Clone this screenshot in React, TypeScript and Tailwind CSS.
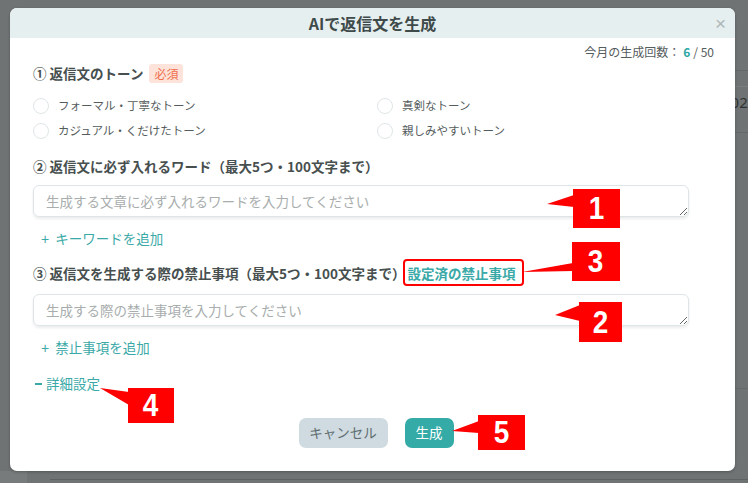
import React from "react";

function Radio({ label }: { label: string }) {
  return (
    <div className="flex items-center h-[25px]">
      <span className="w-[16px] h-[16px] rounded-full border border-[#dfe6e7] bg-white shrink-0" />
      <span className="ml-[9px] text-[11.5px] text-[#555c5c] leading-none">{label}</span>
    </div>
  );
}

function NumBox({ n, cls }: { n: string; cls: string }) {
  return (
    <div className={`absolute bg-[#ff0000] flex items-center justify-center text-white font-bold font-['Liberation_Sans',Arial,sans-serif] text-[31px] leading-none ${cls}`}>
      <span className="scale-x-[0.9] inline-block">{n}</span>
    </div>
  );
}

export default function App() {
  return (
    <div className="relative w-[748px] h-[483px] overflow-hidden bg-[#6f7373] font-['Noto_Sans_CJK_JP','Noto_Sans',sans-serif]">
      {/* background page hints */}
      <div className="absolute left-[700px] top-[70px] w-[48px] h-px bg-[#636767]" />
      <div className="absolute left-[700px] top-[86px] w-[48px] h-px bg-[#7a7e7e]" />
      <div className="absolute left-[722px] top-[91px] text-[15px] text-[#2f3333] font-['Noto_Sans',sans-serif]">202</div>
      <div className="absolute left-[700px] top-[132px] w-[48px] h-px bg-[#636767]" />
      <div className="absolute left-[700px] top-[388px] w-[48px] h-px bg-[#666a6a]" />
      <div className="absolute left-[0px] top-[471px] w-[27px] h-[12px] bg-[#777b7b]" />
      <div className="absolute left-[50px] top-[479px] w-[698px] h-px bg-[#5e6262]" />

      {/* modal */}
      <div className="absolute left-[10px] top-[8px] w-[725px] h-[463px] bg-white rounded-[7px] shadow-[0_1px_3px_rgba(0,0,0,0.25)] flex flex-col">
        <div className="relative h-[30px] bg-[#e6eff0] rounded-t-[7px] flex items-center justify-center shrink-0">
          <span className="text-[16px] font-bold text-[#3f4a4a] leading-none">AIで返信文を生成</span>
          <span className="absolute right-[9px] top-[6px] text-[19px] leading-none text-[#aeb7b7] font-['Liberation_Sans',sans-serif]">×</span>
        </div>

        <div className="flex flex-col pl-[23px] pr-[21px]">
          <div className="mt-[5px] h-[18px] flex items-center justify-end text-[12px] text-[#555c5c] leading-none">
            <span>今月の生成回数：</span>
            <span className="ml-[3px] font-bold text-[#2ea8a5]">6</span>
            <span className="ml-[3px]">/ 50</span>
          </div>

          <div className="mt-[3px] h-[19px] flex items-center">
            <span className="text-[13.5px] font-bold text-[#474f4f] leading-none">① 返信文のトーン</span>
            <span className="ml-[6px] h-[19px] px-[5px] rounded-[3px] bg-[#fde3d9] text-[#f0704d] text-[12px] leading-none flex items-center">必須</span>
          </div>

          <div className="mt-[10px] grid grid-cols-[344px_1fr]">
            <Radio label="フォーマル・丁寧なトーン" />
            <Radio label="真剣なトーン" />
            <Radio label="カジュアル・くだけたトーン" />
            <Radio label="親しみやすいトーン" />
          </div>

          <div className="mt-[14px] h-[20px] flex items-center">
            <span className="text-[13.5px] font-bold text-[#474f4f] leading-none">② 返信文に必ず入れるワード（最大5つ・100文字まで）</span>
          </div>

          <textarea
            className="mt-[8px] w-[656px] h-[32px] rounded-[6px] border border-[#dde5e6] shadow-[0_2px_3px_rgba(0,0,0,0.08)] pl-[12px] pt-[5px] text-[13.5px] leading-[20px] placeholder:text-[#a8adad] outline-none"
            placeholder="生成する文章に必ず入れるワードを入力してください"
          />

          <div className="mt-[12px] h-[20px] flex items-center pl-[8px] text-[13.5px] text-[#3aa9a7] leading-none">
            <span className="font-['Liberation_Sans',sans-serif] text-[14px]">+</span>
            <span className="ml-[6px]">キーワードを追加</span>
          </div>

          <div className="mt-[11px] h-[27px] flex items-center">
            <span className="text-[13.5px] font-bold text-[#474f4f] leading-none">③ 返信文を生成する際の禁止事項（最大5つ・100文字まで）</span>
            <span className="ml-[2px] text-[13.5px] font-bold text-[#3aa9a7] leading-none">設定済の禁止事項</span>
          </div>

          <textarea
            className="mt-[7px] w-[656px] h-[32px] rounded-[6px] border border-[#dde5e6] shadow-[0_2px_3px_rgba(0,0,0,0.08)] pl-[12px] pt-[5px] text-[13.5px] leading-[20px] placeholder:text-[#a8adad] outline-none"
            placeholder="生成する際の禁止事項を入力してください"
          />

          <div className="mt-[12px] h-[20px] flex items-center pl-[8px] text-[13.5px] text-[#3aa9a7] leading-none">
            <span className="font-['Liberation_Sans',sans-serif] text-[14px]">+</span>
            <span className="ml-[6px]">禁止事項を追加</span>
          </div>

          <div className="mt-[16px] h-[20px] flex items-center pl-[2px] text-[13.5px] text-[#3aa9a7] leading-none">
            <span className="w-[7px] h-[1.5px] bg-[#3aa9a7]" />
            <span className="ml-[4px]">詳細設定</span>
          </div>

          <div className="mt-[24px] flex justify-center gap-[17px] pl-[5px]">
            <button className="h-[30px] w-[89px] rounded-[7px] bg-[#cfdbe0] text-[#5f6e72] text-[13.5px] leading-none">キャンセル</button>
            <button className="h-[30px] w-[49px] rounded-[7px] bg-[#35aba7] text-white text-[13.5px] leading-none">生成</button>
          </div>
        </div>
      </div>

      {/* annotations */}
      <div className="absolute left-[403px] top-[259px] w-[121px] h-[27px] border-2 border-[#ff0000] rounded-[4px]" />
      <svg className="absolute left-0 top-0" width="748" height="483">
        <polygon points="547,204 574,195 574,207" fill="#ff0000" />
        <polygon points="522,272 573,263 573,271" fill="#ff0000" />
        <polygon points="555,315 580,305 580,321" fill="#ff0000" />
        <polygon points="100,388 129,392 129,405" fill="#ff0000" />
        <polygon points="452,431 479,421 479,433" fill="#ff0000" />
      </svg>
      <NumBox n="1" cls="left-[573px] top-[189px] w-[47px] h-[39px]" />
      <NumBox n="3" cls="left-[572px] top-[242px] w-[48px] h-[39px]" />
      <NumBox n="2" cls="left-[579px] top-[302px] w-[43px] h-[40px]" />
      <NumBox n="4" cls="left-[128px] top-[388px] w-[46px] h-[35px]" />
      <NumBox n="5" cls="left-[478px] top-[415px] w-[47px] h-[35px]" />
    </div>
  );
}
